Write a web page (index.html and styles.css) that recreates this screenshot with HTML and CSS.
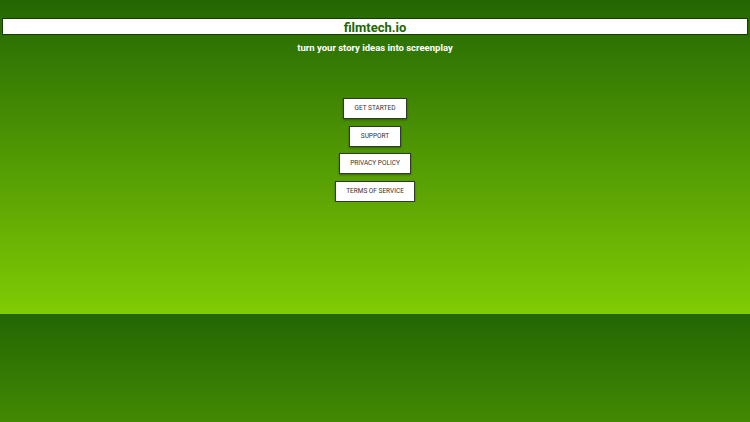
FILE: index.html
```html
<!DOCTYPE html>
<html lang="en">
<head>
<meta charset="utf-8">
<title>filmtech.io</title>
<link rel="stylesheet" href="styles.css">
</head>
<body>
<header class="site-header"><span class="title">filmtech.io</span></header>
<p class="tagline"><span class="tagline-text">turn your story ideas into screenplay</span></p>
<nav class="menu">
  <a class="btn" href="#">Get Started</a>
  <a class="btn" href="#">Support</a>
  <a class="btn" href="#">Privacy Policy</a>
  <a class="btn" href="#">Terms of Service</a>
</nav>
</body>
</html>
```
FILE: styles.css
```css
html {
  background: linear-gradient(#236603, #80cc04) 0 0 / 100% 314px repeat;
}
body {
  margin: 0;
  padding-top: 18px;
  font-family: Roboto, "Liberation Sans", sans-serif;
}
.site-header {
  margin: 0 2px;
  height: 15px;
  line-height: 15px;
  border: 1px solid #143c02;
  background: #ffffff;
  text-align: center;
}
.title {
  font-size: 13px;
  font-weight: 700;
  color: #236603;
}
.tagline {
  margin: 5px 0 0;
  text-align: center;
  line-height: 12px;
}
.tagline-text {
  font-size: 9.5px;
  font-weight: 700;
  color: #ffffff;
}
.menu {
  display: flex;
  flex-direction: column;
  align-items: center;
  gap: 6.5px;
  margin-top: 44px;
}
.btn {
  display: block;
  height: 19px;
  line-height: 19px;
  padding: 0 10.5px;
  background: #ffffff;
  border: 1px solid #2f3a2a;
  box-shadow: 0 1px 2px rgba(0, 0, 0, 0.35);
  font-size: 6.5px;
  text-transform: uppercase;
  color: #333333;
  text-decoration: none;
}
```
